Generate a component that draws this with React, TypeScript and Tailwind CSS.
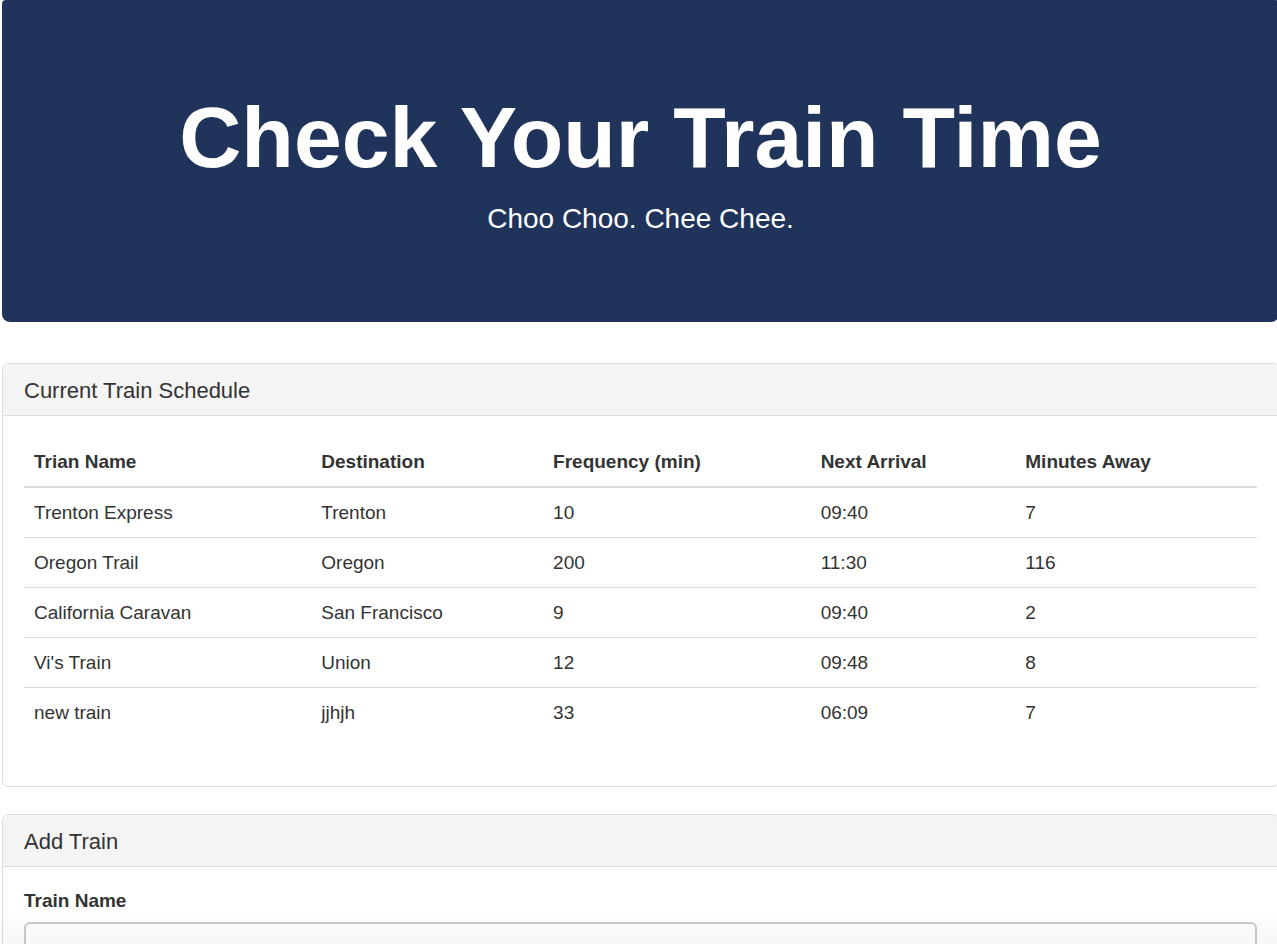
import type { ReactNode } from "react";

type Train = {
  name: string;
  destination: string;
  frequency: number;
  nextArrival: string;
  minutesAway: number;
};

const trains: Train[] = [
  { name: "Trenton Express", destination: "Trenton", frequency: 10, nextArrival: "09:40", minutesAway: 7 },
  { name: "Oregon Trail", destination: "Oregon", frequency: 200, nextArrival: "11:30", minutesAway: 116 },
  { name: "California Caravan", destination: "San Francisco", frequency: 9, nextArrival: "09:40", minutesAway: 2 },
  { name: "Vi's Train", destination: "Union", frequency: 12, nextArrival: "09:48", minutesAway: 8 },
  { name: "new train", destination: "jjhjh", frequency: 33, nextArrival: "06:09", minutesAway: 7 },
];

const columns = [
  { label: "Trian Name", width: "w-[23.3%]" },
  { label: "Destination", width: "w-[18.8%]" },
  { label: "Frequency (min)", width: "w-[21.7%]" },
  { label: "Next Arrival", width: "w-[16.6%]" },
  { label: "Minutes Away", width: "w-[19.6%]" },
];

function Panel({ title, children }: { title: string; children: ReactNode }) {
  return (
    <section className="rounded-md border border-[#dddddd] bg-white">
      <h2 className="rounded-t-md border-b border-[#dddddd] bg-[#f4f4f4] px-[21px] pt-[13px] pb-[11px] text-[22px] leading-[27px] text-[#333333]">
        {title}
      </h2>
      <div className="px-[21px] py-5">{children}</div>
    </section>
  );
}

export default function App() {
  return (
    <main className="overflow-x-hidden pl-0.5 font-['Liberation_Sans',Arial,sans-serif] text-[19px] leading-[27px] text-[#333333]">
      <div className="-mr-0.5">
        <header className="mb-[41px] rounded-t-sm rounded-b-lg bg-[#20345b] px-5 pt-[89px] pb-[85px] text-center text-white">
          <h1 className="text-[86px] leading-[97px] font-bold">Check Your Train Time</h1>
          <p className="mt-[14px] text-[28px] leading-[37px]">Choo Choo. Chee Chee.</p>
        </header>

        <div className="flex flex-col gap-[27px]">
          <Panel title="Current Train Schedule">
            <table className="mb-[29px] w-full table-fixed border-collapse text-left">
              <thead>
                <tr className="border-b-2 border-[#dddddd]">
                  {columns.map((column) => (
                    <th key={column.label} scope="col" className={`${column.width} px-2.5 pt-3 pb-[11px] font-bold`}>
                      {column.label}
                    </th>
                  ))}
                </tr>
              </thead>
              <tbody>
                {trains.map((train) => (
                  <tr key={train.name} className="border-t border-[#dddddd]">
                    <td className="px-2.5 py-[11px]">{train.name}</td>
                    <td className="px-2.5 py-[11px]">{train.destination}</td>
                    <td className="px-2.5 py-[11px]">{train.frequency}</td>
                    <td className="px-2.5 py-[11px]">{train.nextArrival}</td>
                    <td className="px-2.5 py-[11px]">{train.minutesAway}</td>
                  </tr>
                ))}
              </tbody>
            </table>
          </Panel>

          <Panel title="Add Train">
            <form>
              <label htmlFor="train-name" className="mb-2 block font-bold">
                Train Name
              </label>
              <input
                id="train-name"
                type="text"
                className="block h-[46px] w-full rounded-md border-2 border-[#cccccc] bg-white px-4"
              />
            </form>
          </Panel>
        </div>
      </div>
      <div className="pointer-events-none fixed inset-x-0 bottom-0 h-9 bg-linear-to-b from-transparent to-black/3" />
    </main>
  );
}
